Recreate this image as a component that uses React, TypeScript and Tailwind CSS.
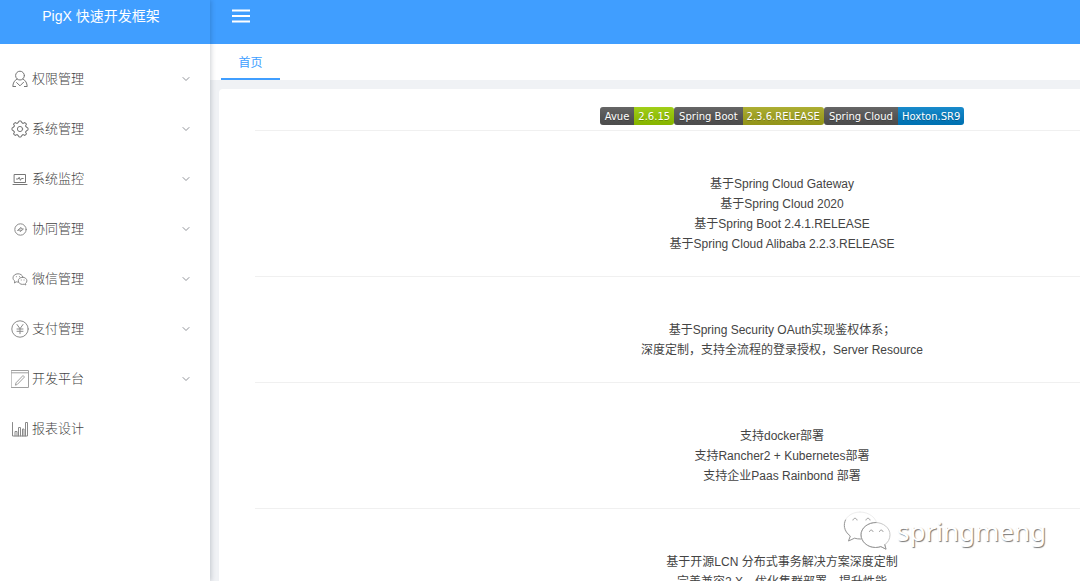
import type { ReactNode } from "react";
import { ChevronDown } from "lucide-react";

const Icon = ({ children }: { children: ReactNode }) => (
  <svg
    viewBox="0 0 18 18"
    className="w-[18px] h-[18px] shrink-0"
    fill="none"
    stroke="#8a8a8a"
    strokeWidth={1}
    strokeLinecap="round"
    strokeLinejoin="round"
    aria-hidden="true"
  >
    {children}
  </svg>
);

const UserIcon = () => (
  <Icon>
    <g stroke="#777">
      <circle cx="9" cy="5.6" r="4.4" />
      <path d="M6 9C3.400 10.500 2 12.800 1.800 16.500h2.800M12 9c2.600 1.500 4 3.800 4.200 7.500h-2.800M5.600 12.600 9 15.800l3.600-3.600" />
    </g>
  </Icon>
);

const GEAR_TEETH = [0, 45, 90, 135, 180, 225, 270, 315];

const GearIcon = () => (
  <Icon>
    <g stroke="#777">
      <circle cx="9" cy="9" r="2.6" />
      {GEAR_TEETH.map((deg) => (
        <path
          key={deg}
          d="M6.500 3 7.500 2.600 7.800 1h2.400l.3 1.600 1 .4"
          transform={`rotate(${deg} 9 9)`}
        />
      ))}
    </g>
  </Icon>
);

const MonitorIcon = () => (
  <Icon>
    <path
      d="M3.500 4.500h11v8h-11zM2 14.500h14M5.500 9h1.700l1-1.700 1.200 3 1-1.800h1.800"
      stroke="#777"
    />
  </Icon>
);

const CompassIcon = () => (
  <Icon>
    <circle cx="9.500" cy="9.500" r="5.700" />
    <path d="M6.800 10.200 10 7.400v1.400l2.400.2-3.200 2.600v-1.400z" />
  </Icon>
);

const WechatIcon = () => (
  <Icon>
    <path d="M7.400 12.100c-.8 0-1.500-.1-2.100-.3L3.400 13l.4-1.900C2.600 10.300 2 9.100 2 7.900 2 5.600 4.200 3.800 7 3.800c2.400 0 4.400 1.300 4.900 3.200" />
    <path d="M11.600 7.200c2.400 0 4.300 1.600 4.300 3.600 0 1.100-.6 2-1.400 2.700l.3 1.500-1.600-.8c-.5.1-1 .2-1.600.2-2.400 0-4.300-1.600-4.300-3.600s1.900-3.600 4.300-3.600z" />
    <path d="M5.300 6.700h.1M8.400 6.700h.1M10.200 10h.1M13 10h.1" />
  </Icon>
);

const YenIcon = () => (
  <Icon>
    <circle cx="9" cy="9" r="8.200" />
    <path d="M6 4.500 9 8.700l3-4.200M9 8.700v5M6 9h6M6 11.300h6" />
  </Icon>
);

const DevIcon = () => (
  <Icon>
    <path
      d="M.5.500h17v17H.5zM.5 2.800h17M4.500 14.800l.5-2 7-7.300 1.500 1.500-7 7.200z"
      stroke="#a0a0a0"
    />
  </Icon>
);

const ChartIcon = () => (
  <Icon>
    <path d="M1.500 2.500v13.500h15V2.500h-2V16M4 16v-4.500h2V16M7.500 16V7.500h2V16M11.500 16V9h1.500v7" />
  </Icon>
);

const menu = [
  { label: "权限管理", icon: UserIcon, nested: true },
  { label: "系统管理", icon: GearIcon, nested: true },
  { label: "系统监控", icon: MonitorIcon, nested: true },
  { label: "协同管理", icon: CompassIcon, nested: true },
  { label: "微信管理", icon: WechatIcon, nested: true },
  { label: "支付管理", icon: YenIcon, nested: true },
  { label: "开发平台", icon: DevIcon, nested: true },
  { label: "报表设计", icon: ChartIcon, nested: false },
];

const badges = [
  { name: "Avue", value: "2.6.15", color: "bg-[#97ca00]" },
  { name: "Spring Boot", value: "2.3.6.RELEASE", color: "bg-[#a4a61d]" },
  { name: "Spring Cloud", value: "Hoxton.SR9", color: "bg-[#007ec6]" },
];

const sections = [
  [
    "基于Spring Cloud Gateway",
    "基于Spring Cloud 2020",
    "基于Spring Boot 2.4.1.RELEASE",
    "基于Spring Cloud Alibaba 2.2.3.RELEASE",
  ],
  [
    "基于Spring Security OAuth实现鉴权体系；",
    "深度定制，支持全流程的登录授权，Server Resource",
  ],
  [
    "支持docker部署",
    "支持Rancher2 + Kubernetes部署",
    "支持企业Paas Rainbond 部署",
  ],
  [
    "基于开源LCN 分布式事务解决方案深度定制",
    "完善兼容2.X，优化集群部署，提升性能",
  ],
];

const Sidebar = () => (
  <aside className="relative z-10 flex flex-col w-[210px] shrink-0 bg-white shadow-[1px_0_5px_rgba(0,21,41,0.2)]">
    <div className="h-11 shrink-0 bg-[#409eff] pr-2 text-center text-[14px] leading-8 text-white">
      PigX 快速开发框架
    </div>
    <nav className="flex flex-col pt-2.5">
      {menu.map(({ label, icon: ItemIcon, nested }) => (
        <button
          key={label}
          type="button"
          className="flex items-center h-[50px] pl-[11px] pr-[18px] text-[13px] font-light text-[#444]"
        >
          <ItemIcon />
          <span className="ml-[3px]">{label}</span>
          {nested && (
            <ChevronDown
              size={12}
              strokeWidth={2}
              className="ml-auto text-[#909399]"
            />
          )}
        </button>
      ))}
    </nav>
  </aside>
);

const Badge = ({
  name,
  value,
  color,
}: {
  name: string;
  value: string;
  color: string;
}) => (
  <span className="flex h-[18px] overflow-hidden rounded-[3px] font-['DejaVu_Sans',sans-serif] text-[10px] leading-5 text-white [text-shadow:0_1px_0_rgba(1,1,1,0.2)]">
    <span className="bg-[#555] px-[5px] bg-linear-to-b from-white/10 to-black/10">
      {name}
    </span>
    <span className={`${color} px-1 bg-linear-to-b from-white/10 to-black/10`}>
      {value}
    </span>
  </span>
);

const Watermark = () => (
  <div className="absolute right-[34px] bottom-[30px] flex items-center gap-1.5">
    <svg
      viewBox="0 0 48 40"
      className="w-12 h-10"
      fill="none"
      stroke="#999"
      strokeLinecap="round"
      aria-hidden="true"
    >
      <path
        d="M17 1C8 1 1 7 1 14.500c0 4.500 2.500 8.200 6.300 10.500L5.500 30l6-2.800c2 .6 4 .8 6.500.8 9 0 16-6 16-13.500S26 1 17 1z"
        fill="#fff"
        stroke="#eee"
      />
      <path d="M2.500 9C.5 13 .5 20 7.300 25L5.500 30l6-2.800c2 .6 4 .8 6 .8" />
      <path
        d="M32.500 11.500c-8 0-14.500 5.500-14.500 12.300s6.500 12.700 14.500 12.700c1.900 0 3.700-.3 5.300-.9l5.200 2.600-1.200-4.500c3.200-2.200 5.200-5.800 5.200-9.900 0-6.800-6.500-12.300-14.500-12.300z"
        fill="#fff"
        stroke="#c8c8c8"
      />
      <path d="M33 11.500c-8 0-15 5.500-15 12.300s6.500 12.700 14.500 12.700c1.900 0 3.700-.3 5.300-.9l5.200 2.600-1.200-4.500" />
      <path d="M10 9c.6-2.400 3.400-2.400 4 0M23 9c.6-2.400 3.400-2.400 4 0M26.500 20.500c.5-2 3-2 3.500 0M36.500 20.500c.5-2 3-2 3.500 0" />
    </svg>
    <span className="font-['Noto_Sans',sans-serif] text-[26px] leading-10 text-white [text-shadow:1px_1px_1px_#777]">
      springmeng
    </span>
  </div>
);

const App = () => (
  <div className="relative flex h-screen overflow-hidden bg-[#f0f2f5] font-['Liberation_Sans','Noto_Sans_CJK_SC',sans-serif]">
    <Sidebar />
    <div className="flex flex-col flex-1 min-w-0">
      <header className="h-11 shrink-0 bg-[#409eff] pl-[22px] pt-[9px]">
        <button type="button" aria-label="菜单" className="block">
          <svg
            viewBox="0 0 18 14"
            className="w-[18px] h-3.5"
            stroke="#fff"
            strokeWidth="1.8"
            aria-hidden="true"
          >
            <path d="M0 1.500h18M0 7h18M0 12.500h18" />
          </svg>
        </button>
      </header>
      <div className="flex h-9 shrink-0 bg-white pl-[11px]">
        <button
          type="button"
          className="w-[59px] border-b-2 border-[#409eff] pt-1 text-[12px] text-[#409eff]"
        >
          首页
        </button>
      </div>
      <main className="flex-1 min-h-0 overflow-hidden pl-[9px] pt-[9px]">
        {/* the board is wider than the viewport and runs off to the right */}
        <div className="min-w-[1126px] min-h-full rounded-tl bg-white px-9 pt-[18px]">
          <div className="flex justify-center pb-[5px]">
            {badges.map((b) => (
              <Badge key={b.name} {...b} />
            ))}
          </div>
          {sections.map((lines) => (
            <section
              key={lines[0]}
              className="border-t border-[#f0f0f0] pt-[43px] pb-[22px] text-center text-[12px] leading-5 text-[#444]"
            >
              {lines.map((line) => (
                <p key={line}>{line}</p>
              ))}
            </section>
          ))}
        </div>
      </main>
    </div>
    <Watermark />
  </div>
);

export default App;
